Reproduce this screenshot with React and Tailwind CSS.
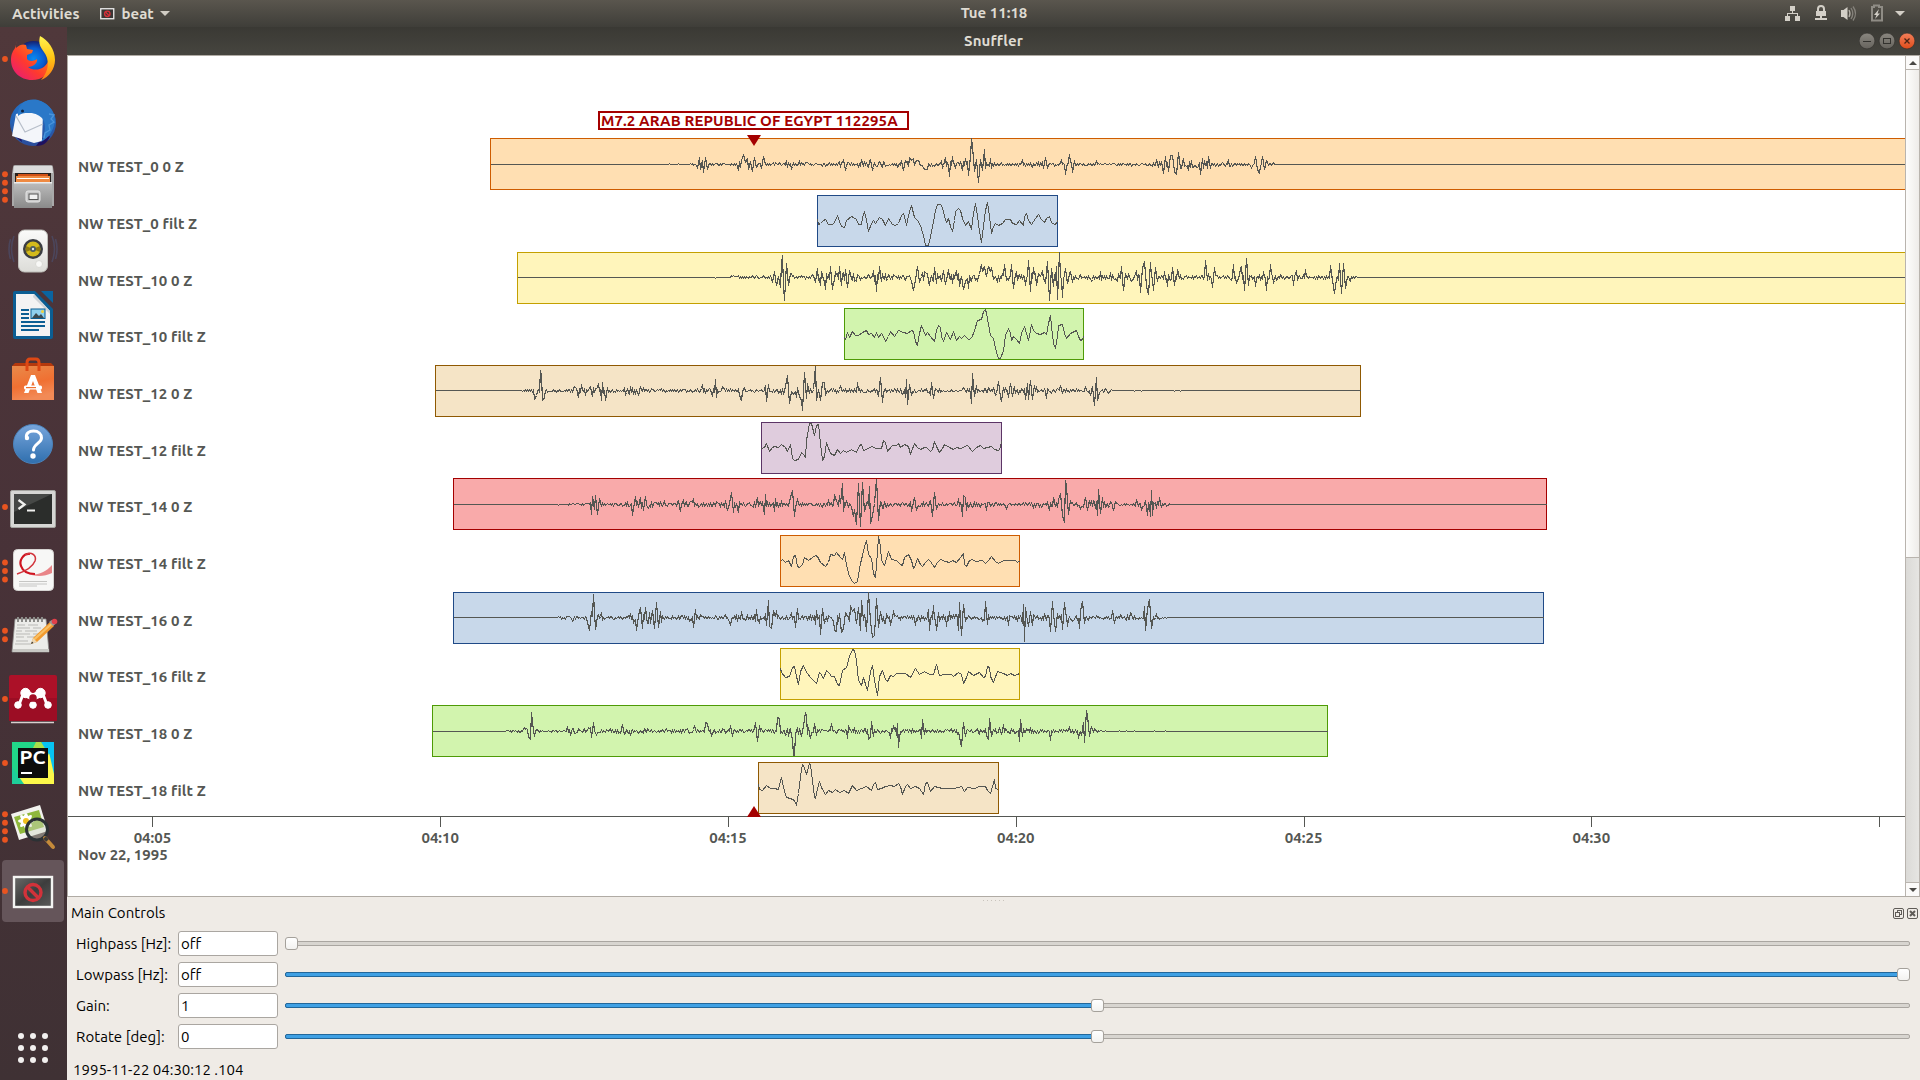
import React from "react";

/* ---------- trace data ----------
   Samples are kept in chunks. A chunk has its own origin (x0, y0), its own
   number of sample units per pixel (kx, 3 vertically) and a zero line b. */

const TRACES = [
  {
    name: "NW TEST_0 0 Z", left: 490, right: 1905, open: true, top: 138, pitch: "h-[57px]",
    box: "bg-[#ffdfb2] border-[#ce5c00]",
    raw: [
      { x0: 480, y0: 100, kx: 3, b: 193, from: 31, to: 1380,
        env: "31 0 540 0 550 3 600 3 640 4 655 12 680 12 690 7 720 5 760 5 780 14 830 14 850 10 880 8 910 7 930 12 965 10 1000 5 1060 7 1080 12 1110 10 1150 12 1190 14 1240 8 1260 12 1380 8",
        pk: "653 205 657 171 662 207 667 180 671 218 676 173 681 208 776 210 784 180 790 162 795 188 801 175 804 207 810 183 817 215 824 171 832 195 845 205 851 168 856 194 920 180 935 209 957 180 1090 178 1095 210 1144 177 1170 178 1176 212 1265 182 1271 212 1276 180 1287 171 1293 180 1300 175 1308 182 1315 182 1322 195 1330 205 1337 208 1343 208 1352 198 1362 200 1370 190" },
      { x0: 940, y0: 100, kx: 3, b: 193, from: 0, to: 2900,
        env: "0 12 160 8 230 5 290 10 330 8 350 5 400 10 430 4 480 4 560 4 590 8 610 3 640 8 660 14 730 14 790 14 830 9 860 8 920 6 980 8 1015 2 1018 0 2900 0",
        pk: "3 180 8 205 17 171 28 230 36 168 45 205 60 185 68 210 77 175 85 226 90 170 94 116 98 138 104 215 110 178 115 246 121 178 126 210 132 148 137 205 150 175 155 205 246 178 310 205 316 171 322 205 365 178 377 222 384 185 389 162 396 216 404 180 470 180 650 178 663 185 670 220 677 170 684 215 691 166 698 165 703 213 710 222 716 156 722 205 730 175 744 210 755 180 780 222 786 175 806 168 812 205 865 178 935 205 946 168 952 208 959 220 966 168 972 208 980 180 1000 188 1017 193" },
    ],
  },
  {
    name: "NW TEST_0 filt Z", left: 817, right: 1058, top: 195, pitch: "h-[57px]",
    box: "bg-[#c8d8ea] border-[#204a87]",
    line: [
      { x0: 480, y0: 100, kx: 3, p: "1011 357 1016 372 1022 371 1029 362 1036 358 1046 373 1056 373 1062 366 1072 347 1079 365 1085 378 1093 382 1100 362 1114 348 1121 353 1129 357 1136 373 1144 373 1147 353 1153 334 1159 362 1166 393 1173 371 1180 362 1187 371 1198 352 1208 357 1216 375 1226 355 1236 374 1245 376 1256 369 1263 345 1269 340 1275 362 1280 376 1288 334 1295 316 1302 352 1312 361 1322 375 1330 407 1337 437 1346 437 1352 410 1360 365 1366 330 1373 313" },
      { x0: 940, y0: 100, kx: 3, p: "0 312 7 321 13 350 20 368 26 355 32 380 37 395 42 360 47 335 54 325 60 331 66 355 77 376 86 365 95 388 100 340 106 311 112 350 118 395 124 427 130 380 136 330 142 308 147 350 154 400 160 380 165 371 175 376 186 371 196 357 210 358 218 371 228 374 237 361 249 375 254 350 260 340 266 360 275 374 286 355 296 343 304 358 312 368 320 356 327 348 334 368 342 373 348 369 352 360" },
    ],
  },
  {
    name: "NW TEST_10 0 Z", left: 517, right: 1905, open: true, top: 252, pitch: "h-[56px]",
    box: "bg-[#fff5bb] border-[#c4a000]",
    raw: [
      { x0: 480, y0: 100, kx: 3, b: 532, from: 111, to: 1380,
        env: "111 0 620 0 622 2 700 2 745 2 755 7 800 5 840 5 870 10 880 20 900 20 930 14 950 7 1000 10 1015 20 1110 18 1150 9 1180 18 1240 10 1290 10 1300 18 1380 18",
        pk: "877 548 883 514 889 555 895 530 901 563 904 490 907 465 910 555 913 602 919 489 925 556 931 520 1005 548 1012 505 1021 555 1025 515 1036 568 1050 498 1057 569 1065 515 1077 498 1084 555 1095 508 1101 562 1109 512 1180 512 1189 575 1197 499 1205 545 1295 545 1300 570 1305 540 1313 498 1319 548 1333 515 1347 555 1362 502 1370 550" },
      { x0: 940, y0: 100, kx: 3, b: 532, from: 0, to: 2900,
        env: "0 15 110 12 180 14 240 14 330 18 400 12 430 6 470 8 500 14 560 14 600 14 660 8 700 14 740 8 780 6 800 18 830 10 860 5 880 14 940 14 1000 14 1040 8 1070 16 1110 8 1150 8 1170 15 1220 10 1235 6 1252 4 1254 0 2900 0",
        pk: "3 545 10 512 17 552 25 508 38 550 50 512 57 560 64 528 69 567 77 545 85 565 95 545 107 540 117 522 123 494 127 515 132 500 140 530 145 500 150 515 155 502 160 538 165 530 172 548 193 492 200 540 213 492 220 565 229 515 256 555 265 482 272 575 280 502 290 555 300 530 308 512 315 550 323 484 328 602 335 505 341 560 348 500 353 598 359 458 366 593 375 505 382 550 390 515 398 548 455 545 480 515 510 518 545 498 550 572 557 520 590 512 601 577 607 505 613 484 620 560 626 584 631 487 640 570 646 502 652 545 672 515 683 558 698 502 704 555 711 508 796 482 801 540 805 520 816 562 823 502 880 493 890 550 900 505 904 500 913 570 918 475 925 555 933 526 946 558 970 515 979 572 992 492 1000 550 1060 555 1068 510 1095 508 1170 495 1177 540 1183 580 1190 535 1197 489 1203 580 1209 490 1215 565 1222 530 1230 545" },
    ],
  },
  {
    name: "NW TEST_10 filt Z", left: 844, right: 1084, top: 308, pitch: "h-[57px]",
    box: "bg-[#d2f4ae] border-[#4e9a06]",
    line: [
      { x0: 480, y0: 100, kx: 3, p: "1090 712 1093 712 1096 718 1103 697 1108 712 1117 694 1126 707 1136 707 1148 698 1158 690 1166 703 1174 700 1183 712 1190 698 1196 712 1203 700 1210 710 1217 724 1224 710 1232 694 1242 710 1255 692 1270 696 1283 700 1293 690 1299 695 1305 723 1312 737 1318 700 1324 676 1329 690 1335 706 1343 698 1352 710 1363 724 1370 690 1376 676" },
      { x0: 940, y0: 100, kx: 3, p: "0 683 4 710 10 724 20 697 30 717 40 694 50 720 58 708 65 714 72 706 84 719 95 716 103 690 113 661 125 659 130 635 135 627 139 640 145 672 152 705 160 714 167 745 175 775 182 775 190 750 197 705 204 686 210 700 213 720 220 709 230 719 238 731 245 700 252 679 258 700 264 722 270 690 275 674 280 690 290 699 300 704 312 696 320 704 326 670 330 645 335 680 340 730 345 745 351 710 355 675 366 673 372 700 380 715 392 700 408 691 415 710 422 720 428 718 430 710" },
    ],
  },
  {
    name: "NW TEST_12 0 Z", left: 435, right: 1361, top: 365, pitch: "h-[57px]",
    box: "bg-[#f5e4c6] border-[#8f5902]",
    raw: [
      { x0: 420, y0: 360, kx: 3, b: 92, from: 45, to: 1440,
        env: "45 0 240 0 245 2 300 3 340 8 370 10 390 5 440 5 465 12 520 15 550 14 570 6 600 5 620 14 660 12 700 5 760 7 830 8 850 10 900 12 950 6 980 8 1020 5 1050 10 1100 12 1150 14 1200 14 1230 8 1290 10 1350 7 1380 10 1410 6 1440 10",
        pk: "343 117 350 105 359 98 362 30 365 50 368 122 372 112 377 90 463 80 470 84 476 113 484 73 497 106 510 78 516 108 535 70 545 122 547 67 556 122 561 82 616 106 632 78 655 105 662 80 848 72 878 110 886 58 890 112 906 78 958 105 964 122 972 82 1036 76 1040 125 1046 74 1090 104 1097 80 1102 45 1107 130 1115 95 1120 102 1128 112 1138 108 1144 120 1148 150 1153 38 1158 115 1163 70 1168 100 1180 88 1185 18 1189 122 1195 88 1200 122 1206 67 1212 68 1217 106 1262 75 1312 68 1375 110 1381 52 1387 128" },
      { x0: 900, y0: 360, kx: 3, b: 92, from: 0, to: 1382,
        env: "0 10 60 7 90 9 120 6 180 4 200 12 240 6 290 12 330 14 400 14 430 8 490 8 520 5 560 9 600 9 620 7 630 4 650 2 980 1 985 0 1500 0",
        pk: "15 112 19 57 23 133 29 72 34 105 90 105 95 67 100 116 107 85 190 82 211 100 215 131 217 40 222 108 229 76 265 82 285 105 296 64 300 112 304 125 310 82 325 112 332 70 337 108 342 80 375 118 381 70 386 118 390 60 397 118 402 75 438 116 480 112 482 76 557 78 570 105 578 78 584 137 588 52 593 122 598 98 604 92 617 85 624 100 632 92" },
    ],
  },
  {
    name: "NW TEST_12 filt Z", left: 761, right: 1002, top: 422, pitch: "h-[56px]",
    box: "bg-[#dfccdd] border-[#5c3566]",
    line: [
      { x0: 420, y0: 360, kx: 3, p: "1025 265 1032 262 1040 250 1048 275 1056 262 1064 259 1074 262 1085 253 1096 262 1102 273 1110 253 1117 294 1124 301 1134 297 1144 277 1150 284 1155 293 1160 240 1168 190 1174 190 1183 227 1190 197 1195 193 1201 250 1207 300 1212 290 1220 247 1230 280 1242 286 1253 268 1262 280 1270 271 1280 277 1293 268 1310 277 1318 257 1324 253 1330 270 1340 268 1354 259 1368 265 1384 265 1389 241 1395 247 1403 273 1416 256 1428 255 1436 250" },
      { x0: 900, y0: 360, kx: 3, p: "0 263 14 253 24 260 32 284 44 249 52 263 62 268 72 262 80 262 90 275 98 268 104 245 110 260 118 278 126 265 134 254 148 263 160 268 170 262 180 265 202 256 218 275 228 262 240 256 250 265 274 259 284 268 296 272 300 262 303 245" },
    ],
  },
  {
    name: "NW TEST_14 0 Z", left: 453, right: 1547, top: 478, pitch: "h-[57px]",
    box: "bg-[#f9aaaa] border-[#a40000]",
    raw: [
      { x0: 420, y0: 360, kx: 3, b: 433, from: 99, to: 1440,
        env: "99 0 385 0 390 3 470 4 510 5 520 18 540 12 560 5 600 8 640 14 690 12 720 10 760 8 790 14 830 10 880 9 930 14 960 9 1020 14 1060 12 1110 14 1140 10 1160 5 1230 12 1290 14 1390 14 1440 7",
        pk: "510 428 514 464 518 410 522 448 526 406 533 462 538 415 543 440 637 465 640 445 646 409 662 412 670 452 677 409 684 445 732 420 781 455 790 418 820 415 922 452 928 430 934 396 941 457 948 430 956 457 1012 412 1033 462 1037 403 1063 455 1067 416 1110 412 1117 391 1123 470 1131 415 1226 418 1243 402 1250 425 1258 405 1262 430 1266 370 1271 455 1280 420 1298 455 1301 470 1304 448 1310 494 1315 370 1321 500 1327 367 1333 455 1340 430 1347 380 1352 490 1358 465 1363 430 1366 395 1370 357 1375 482 1382 425 1390 445" },
      { x0: 900, y0: 360, kx: 3, b: 433, from: 0, to: 1940,
        env: "0 8 30 12 60 12 100 10 120 7 170 10 200 14 230 9 270 10 300 7 370 6 400 10 440 10 460 16 490 18 510 9 540 12 560 14 610 14 640 10 660 4 690 6 720 10 760 14 790 10 806 5 812 2 830 1 832 0 1941 0",
        pk: "33 455 43 412 50 450 92 420 97 470 103 396 108 448 176 415 186 470 190 405 196 412 200 452 260 450 319 448 400 445 447 450 459 412 465 440 475 418 480 465 482 400 488 465 494 488 497 360 500 378 505 463 510 420 540 448 555 412 561 452 592 465 596 388 602 460 608 412 640 452 645 425 708 418 725 450 735 420 742 465 750 470 754 391 758 465 765 428 779 412 785 442 797 430" },
    ],
  },
  {
    name: "NW TEST_14 filt Z", left: 780, right: 1020, top: 535, pitch: "h-[57px]",
    box: "bg-[#ffdfb2] border-[#ce5c00]",
    line: [
      { x0: 420, y0: 360, kx: 3, p: "1082 603 1088 597 1096 608 1104 600 1115 620 1121 590 1126 587 1132 618 1138 623 1148 614 1153 593 1166 602 1176 593 1186 586 1192 589 1202 608 1216 620 1226 606 1232 583 1243 587 1250 578 1260 592 1268 598 1274 578 1280 612 1286 640 1294 660 1304 670 1313 665 1320 610 1328 585 1332 560 1338 541 1345 582 1354 596 1360 640 1366 652 1371 575 1376 530 1380 560 1385 600 1392 616 1398 595 1404 575 1414 598 1430 600" },
      { x0: 900, y0: 360, kx: 3, p: "0 614 6 616 14 592 26 583 33 600 39 625 44 622 51 595 60 612 68 620 75 606 84 598 92 603 104 622 112 606 122 598 135 603 148 606 156 602 168 607 180 592 190 580 194 612 200 618 208 600 216 598 226 603 246 602 256 610 266 602 275 590 285 605 296 610 310 602 335 602 345 601 352 608 360 602" },
    ],
  },
  {
    name: "NW TEST_16 0 Z", left: 453, right: 1544, top: 592, pitch: "h-[56px]",
    box: "bg-[#c8d8ea] border-[#204a87]",
    raw: [
      { x0: 420, y0: 580, kx: 3, b: 113, from: 99, to: 1440,
        env: "99 0 405 0 412 4 450 6 500 6 530 14 545 10 580 5 620 6 640 14 700 18 730 8 770 8 800 10 830 12 860 4 900 8 930 14 970 10 1000 12 1060 12 1090 7 1120 14 1150 7 1180 14 1240 16 1290 10 1400 20 1430 8 1440 12",
        pk: "457 125 503 128 509 150 513 95 517 110 521 42 527 148 532 110 543 98 632 100 640 130 650 150 655 105 662 82 668 145 677 82 686 130 697 92 704 146 709 68 715 142 720 95 725 128 820 142 825 88 930 136 965 95 1010 88 1018 130 1035 100 1040 135 1045 60 1049 140 1054 146 1060 90 1069 92 1115 98 1126 142 1133 85 1185 132 1190 90 1200 162 1206 85 1212 130 1232 112 1243 150 1250 155 1258 100 1264 158 1270 145 1276 98 1283 108 1290 75 1297 95 1304 85 1308 130 1315 82 1320 150 1324 62 1330 120 1338 155 1344 36 1350 125 1358 172 1364 165 1369 56 1374 142 1382 95 1392 130 1412 135 1420 90" },
      { x0: 900, y0: 580, kx: 2.376, b: 113, from: 0, to: 1529,
        env: "0 8 30 14 60 10 110 14 150 10 180 5 200 10 240 6 260 12 300 14 330 12 360 16 400 14 440 14 460 5 500 10 540 14 570 5 600 10 610 6 630 3 640 0 1530 0",
        pk: "36 136 68 88 71 152 79 75 86 152 92 96 110 140 118 95 138 150 141 66 145 166 150 72 155 125 196 125 202 63 208 132 257 135 290 130 293 72 296 183 299 82 305 140 310 95 314 135 358 155 363 63 369 155 374 100 386 148 391 66 397 140 427 145 430 90 434 63 438 130 504 90 510 130 548 97 580 80 584 150 588 85 592 57 598 146 603 110 610 100 617 118" },
    ],
  },
  {
    name: "NW TEST_16 filt Z", left: 780, right: 1020, top: 648, pitch: "h-[57px]",
    box: "bg-[#fff5bb] border-[#c4a000]",
    line: [
      { x0: 420, y0: 580, kx: 3, p: "1081 264 1085 278 1096 292 1108 290 1118 262 1123 260 1128 290 1134 314 1142 275 1149 257 1160 278 1175 295 1190 311 1197 278 1202 280 1210 296 1220 271 1228 280 1235 290 1244 290 1252 312 1258 317 1268 270 1280 262 1288 230 1296 207 1302 210 1308 240 1316 300 1324 315 1331 293 1343 331 1350 275 1357 256 1363 300 1372 346 1378 290 1386 272 1396 298 1402 304 1410 287 1420 290 1430 280" },
      { x0: 900, y0: 580, kx: 2.376, p: "0 281 14 281 25 292 36 265 46 284 58 275 70 282 80 282 87 253 95 286 108 284 122 284 128 290 138 276 146 284 151 310 157 292 162 275 174 287 188 276 198 292 203 290 208 260 212 262 216 290 222 307 232 274 246 281 256 285 262 281 272 287 280 284 285 280" },
    ],
  },
  {
    name: "NW TEST_18 0 Z", left: 432, right: 1328, top: 705, pitch: "h-[57px]",
    box: "bg-[#d2f4ae] border-[#4e9a06]",
    raw: [
      { x0: 420, y0: 580, kx: 3, b: 453, from: 36, to: 1440,
        env: "36 0 230 0 235 2 290 6 320 12 345 8 370 3 420 5 450 12 480 6 510 14 550 7 600 12 640 7 700 10 760 7 820 10 870 10 900 7 940 10 980 5 1010 12 1040 5 1080 8 1120 14 1180 14 1210 6 1240 8 1280 6 1290 12 1320 6 1360 14 1400 5 1420 16 1440 14",
        pk: "312 442 325 468 331 478 334 396 338 430 342 468 443 440 450 466 505 442 514 472 521 427 528 466 607 432 614 464 632 466 823 436 857 428 863 430 875 470 932 436 938 470 1006 428 1012 484 1017 436 1068 455 1073 412 1078 415 1082 460 1095 465 1105 470 1115 468 1118 475 1121 525 1124 525 1127 462 1133 442 1145 470 1150 440 1156 396 1160 405 1163 462 1172 474 1184 430 1190 465 1235 430 1282 474 1286 435 1345 478 1350 470 1355 424 1360 468 1412 474 1419 436 1431 430 1436 502" },
      { x0: 900, y0: 580, kx: 2.376, b: 453, from: 0, to: 1016,
        env: "0 7 45 9 60 8 100 5 130 8 145 18 160 6 200 12 250 10 310 10 350 8 390 9 420 8 440 20 455 9 480 4 515 2 630 1 635 0 1017 0",
        pk: "50 474 54 418 58 462 141 470 145 432 147 500 150 490 152 427 156 468 205 465 210 478 212 415 217 468 247 432 284 485 286 418 291 470 357 482 403 440 423 474 432 465 436 426 439 488 443 392 446 405 450 470 456 440 463 445" },
    ],
  },
  {
    name: "NW TEST_18 filt Z", left: 758, right: 999, top: 762, pitch: "h-[54px]",
    box: "bg-[#f5e4c6] border-[#8f5902]",
    line: [
      { x0: 420, y0: 580, kx: 3, p: "1016 612 1019 628 1026 631 1040 617 1052 626 1062 625 1074 628 1080 600 1085 592 1092 635 1098 652 1110 654 1122 660 1130 676 1134 640 1140 590 1147 553 1151 555 1158 583 1163 570 1167 550 1171 555 1176 600 1182 650 1187 654 1191 625 1198 605 1204 622 1216 643 1226 631 1236 638 1246 628 1258 636 1272 630 1286 640 1298 616 1310 631 1325 624 1340 620 1354 631 1360 612 1366 607 1372 628 1384 624 1396 620 1412 617 1424 620 1434 611" },
      { x0: 900, y0: 580, kx: 2.376, p: "0 618 5 643 12 620 17 612 26 626 38 619 47 625 55 643 61 610 66 607 73 635 82 620 100 624 130 626 146 619 153 634 160 622 178 626 190 618 203 619 208 630 214 641 219 620 224 598 228 625 233 629" },
    ],
  },
];

const pairs = (s) => {
  const n = s.split(" ").map(Number);
  const out = [];
  for (let i = 0; i < n.length; i += 2) out.push([n[i], n[i + 1]]);
  return out;
};

function lerp(env, x) {
  for (let i = 1; i < env.length; i++) {
    if (x <= env[i][0]) {
      const [a, va] = env[i - 1];
      const [b, vb] = env[i];
      return va + ((vb - va) * Math.max(0, x - a)) / (b - a || 1);
    }
  }
  return env[env.length - 1][1];
}

/* Named peaks joined by low-level jitter that follows the envelope. */
function rawPoints(chunks, seed) {
  let s = seed;
  const rnd = () => ((s = (s * 1103515245 + 12345) & 0x7fffffff) / 0x7fffffff);
  const pts = [];
  let sign = 1;
  for (const c of chunks) {
    const env = pairs(c.env);
    const peaks = pairs(c.pk).map(([x, y]) => [Math.floor(c.x0 + x / c.kx), Math.floor(c.y0 + y / 3)]);
    const at = new Map(peaks);
    const end = Math.floor(c.x0 + c.to / c.kx);
    for (let x = Math.floor(c.x0 + c.from / c.kx); x <= end; x++) {
      if (at.has(x)) {
        pts.push([x, at.get(x)]);
        continue;
      }
      if (at.has(x + 1) && at.has(x - 1)) continue;
      if (rnd() < 0.65) sign = -sign;
      const a = lerp(env, (x - c.x0) * c.kx);
      const quiet = a <= 3.5 && rnd() < 0.75;
      const v = quiet ? 0 : sign * a * (0.12 + 0.95 * rnd() * (0.4 + 0.6 * rnd()));
      pts.push([x, Math.round(c.y0 + (c.b + v) / 3 - 0.4)]);
    }
  }
  return pts;
}

const linePoints = (chunks) =>
  chunks.flatMap((c) => pairs(c.p).map(([x, y]) => [Math.floor(c.x0 + x / c.kx), Math.floor(c.y0 + y / 3)]));

function Trace({ t, i }) {
  const w = t.right - t.left;
  const pts = t.raw ? rawPoints(t.raw, 977 + i * 131) : linePoints(t.line);
  return (
    <div className={t.pitch + " flex shrink-0 items-start overflow-visible"}>
      <div className="w-[210px] shrink-0 pl-[10px] pt-[20px] text-[15px] leading-[18px] font-bold whitespace-nowrap tracking-[0.09px] text-[#555753]">
        {t.name}
      </div>
      <div
        className={t.box + " box-border h-[52px] shrink-0 border " + (t.open ? "border-r-0" : "")}
        style={{ marginLeft: t.left - 278, width: w }}
      >
        <svg className="-m-px block overflow-visible" width={w} height="52" viewBox={`${t.left} ${t.top} ${w} 52`}>
          <polyline
            points={pts.map(([x, y]) => `${x + 0.5},${y + 0.5}`).join(" ")}
            fill="none" stroke="#555753" strokeWidth={t.raw ? 1.15 : 1} strokeLinejoin="bevel" shapeRendering="crispEdges"
          />
        </svg>
      </div>
    </div>
  );
}

/* ---------- dock ---------- */

const DOCK = [
  { dots: 1, art: (
    <g>
      <circle cx="33.500" cy="32" r="18" fill="url(#ffGlobe)" />
      <path d="M17 14c-1 3-1.500 5-1 7 4-4 8-4 10-3l1 4 6 1-1 3-5 2v4c2 3 8 2 10 0 1 4-4 8-9 8 8 6 19 1 21-8 1-5-1-11-5-15 9 3 11 12 9 20-3 10-11 16-21 16-12 0-21-9-21-20 0-6 2-9 4-12z" fill="url(#ffFox)" />
      <path d="M40 9c8 4 15 13 15 24 0 9-6 17-14 20 6-7 8-14 6-22-2-8-10-10-7-22z" fill="url(#ffTail)" />
    </g>) },
  { art: (
    <g transform="translate(0 1)">
      <circle cx="33" cy="31" r="23" fill="url(#tbBlue)" />
      <path d="M12 42l10 8-2-8zM36 54c8 0 12-4 14-10l-8 2z" fill="#1e1160" />
      <path d="M12 44l4-22c8-2 18 0 27-1l-1 28-8 2z" fill="#f4f6fa" />
      <path d="M16 24l9 16 18-8" fill="none" stroke="#b7bec9" strokeWidth="1.200" />
      <path d="M18 20c2-10 10-14 20-12 10 3 16 10 17 20-1 10-6 18-14 22 4-8 6-18 1-24-6-6-18-7-24-2z" fill="#2a78c8" />
      <path d="M49 22l5 1-3 4 3 3-5 3 1 5-5 3-1 5" fill="none" stroke="#4a94da" strokeWidth="1.300" />
      <circle cx="22.500" cy="19" r="1.500" fill="#10233f" />
    </g>) },
  { dots: 4, art: (
    <g>
      <path d="M13 12q0-2 2-2h36q2 0 2 2l1 7v32H12V19z" fill="#a9a9a9" />
      <path d="M14 11h38l1 7H13z" fill="#dcdcdc" />
      <path d="M15 18h36v10H15z" fill="#2a211d" />
      <path d="M18 19h30v2H18z" fill="#d15015" /><path d="M16 21h34v7H16z" fill="#ef8a42" /><path d="M17 23h32v1H17z" fill="#fff" />
      <path d="M14 27h38v26H14z" fill="url(#grayV)" />
      <path d="M14 27h38v1.500H14z" fill="#ececec" />
      <rect x="26" y="36" width="14" height="11" rx="2" fill="#c9c9c9" stroke="#e6e6e6" /><rect x="29" y="39" width="9" height="5.500" fill="#f1f1f1" stroke="#555" />
    </g>) },
  { art: (
    <g>
      <path d="M14 17q-5 12 0 26M10.500 20q-3 10 0 20M52 17q5 12 0 26M55.500 20q3 10 0 20" fill="none" stroke="#4b5f8f" strokeWidth="1.600" opacity=".4" />
      <rect x="18.500" y="11" width="29" height="42" rx="6" fill="url(#white)" stroke="#bdbdb8" />
      <circle cx="33" cy="30" r="10" fill="#3b3d42" /><circle cx="33" cy="30" r="7.500" fill="#d3ba1c" />
      <path d="M33 30l-7-3v6zM33 30l7-3v6z" fill="#8f7b10" />
      <circle cx="33" cy="30" r="3" fill="#4b5a60" /><circle cx="33" cy="30" r="1.200" fill="#dfe8ea" />
      <circle cx="39" cy="45" r="3.500" fill="#f8f8f6" stroke="#d9d9d5" />
    </g>) },
  { art: (
    <g>
      <path d="M15 8h20l18 18v28q0 2-2 2H15q-2 0-2-2V10q0-2 2-2z" fill="#0b5e93" />
      <path d="M41 8h12v12z" fill="#0a64a0" />
      <path d="M16 11h18l16 17v25H16z" fill="#f3f3f3" /><path d="M34 11l16 17v3L33 14z" fill="#d0d4d8" />
      <path d="M21 26h8v2h-8zM21 30h8v2h-8zM21 34h8v2h-8zM21 38h24v2H21zM21 42h24v2H21zM21 46h18v2H21z" fill="#0b5e93" />
      <rect x="31" y="26" width="14" height="9.500" fill="#8fd0ee" stroke="#0b5e93" /><path d="M32 35l4-5 3 3 2-2 3 4z" fill="#3c4a50" /><circle cx="42.500" cy="28.500" r="1.500" fill="#f3d23b" />
    </g>) },
  { art: (
    <g>
      <path d="M12 19l3-3h36l3 3v6H12z" fill="#b5390d" />
      <path d="M12 19h42v34H12z" fill="url(#bag)" />
      <path d="M27 24v-8q0-4 3-4h6q3 0 3 4v8" fill="none" stroke="#dd4814" strokeWidth="3" />
      <path d="M31 28h4l7 18h-4.500l-4.500-12-4.500 12H24z" fill="#fff" />
      <rect x="24" y="38.500" width="18" height="4" rx="1.500" fill="#fff" /><path d="M26 40h10v1.200H26z" fill="#ef7030" />
    </g>) },
  { art: (
    <g>
      <circle cx="33" cy="33" r="19.500" fill="url(#help)" stroke="#4a82ba" />
      <path d="M26.500 27c-1-5 3-7 7-7 5 0 8 3 8 7 0 5-8 6-8 12" fill="none" stroke="#fff" strokeWidth="3" strokeLinecap="round" />
      <circle cx="27" cy="27" r="2.200" fill="#fff" /><circle cx="33" cy="45" r="2.700" fill="#fff" />
    </g>) },
  { dots: 1, art: (
    <g>
      <rect x="10.500" y="15.500" width="45" height="37" rx="1.500" fill="#d6d6d4" stroke="#a3a39f" />
      <rect x="14" y="19" width="38" height="30" fill="#2b2d2b" /><path d="M14 19h38L14 37z" fill="#464846" />
      <path d="M18.500 25l6 4.500-6 4.500" fill="none" stroke="#f0f0ee" strokeWidth="2.300" /><path d="M27 35.500h8" stroke="#f0f0ee" strokeWidth="2" />
    </g>) },
  { dots: 3, art: (
    <g>
      <rect x="13.500" y="10.500" width="40" height="41" rx="4" fill="#f7f7f6" stroke="#d5d3d1" />
      <path d="M19 42.500h28M19 45h28M19 47h18" stroke="#c6c6c4" strokeWidth="1.200" />
      <path d="M27 34c8 3 17 1 25-8v8c-8 4-18 4-25 0z" fill="#e2545a" opacity=".7" />
      <path d="M30 15c-7-1-11 7-9 12 2 6 8 8 14 8" fill="none" stroke="#cf1420" strokeWidth="2.200" />
      <path d="M25 16c6-4 12 0 10 6-2 5-9 10-18 13" fill="none" stroke="#d2343c" strokeWidth="1.500" />
    </g>) },
  { dots: 2, art: (
    <g>
      <path d="M15 16h31l3 33H12z" fill="#ecece9" stroke="#8d8d8a" strokeWidth=".8" />
      <path d="M13 46h36v3H13z" fill="#c8c8c4" />
      <path d="M17 22h8M28 22h10M17 25h13M33 25h8M16 28h6M25 28h12M16 31h14M33 31h6M16 34h8M27 34h10M16 38h12M15 41h16" stroke="#b9b9b6" strokeWidth="1" />
      <path d="M18 14v5M22 14v5M26 14v5M30 14v5M34 14v5M38 14v5M42 14v5" stroke="#8b8b88" strokeWidth="2" />
      <path d="M31 41l2-6 17-16 4 4-17 16z" fill="#f29a2e" /><path d="M33 36l18-16 1.500 1.500-18 16z" fill="#f8c065" /><path d="M31 41l2-6 4 4z" fill="#ecd7b3" /><path d="M31 41l1-2.500 1.500 1.500z" fill="#333" />
      <path d="M49 19l2.500-2 4 4-2.500 2z" fill="#9a9a98" /><circle cx="54.500" cy="18.500" r="2.800" fill="#e0404a" />
    </g>) },
  { dots: 1, art: (
    <g>
      <path d="M11 55.500h43" stroke="#d8d0cf" strokeWidth="1.500" />
      <rect x="9" y="8" width="48" height="46" rx="2" fill="#ac1128" /><path d="M9 31h48v22q0 1-1 1H10q-1 0-1-1z" fill="#9c0d24" />
      <g fill="#fff" stroke="#fff" strokeWidth="1">
        <path d="M18 38c4-3 2-8 6-11M48 38c-4-3-2-8-6-11" fill="none" strokeWidth="3" />
        <path d="M26 27l7 3 7-3" fill="none" strokeWidth="7" />
        <circle cx="25.500" cy="26" r="4.700" /><circle cx="40.500" cy="26" r="4.700" />
        <circle cx="18" cy="38" r="3.300" /><circle cx="48" cy="38" r="3.300" /><circle cx="33" cy="38" r="3.300" />
      </g>
      <circle cx="33" cy="31" r="3.800" fill="#a30f26" />
    </g>) },
  { dots: 1, art: (
    <g>
      <rect x="12" y="11" width="42" height="42" fill="#21d789" />
      <path d="M42 11h12v30L42 24z" fill="#07c3f2" /><path d="M36 11h5l9 14-18-6z" fill="#a8e04a" /><path d="M54 38v15H20l-2-6 34-26z" fill="#fcf84a" /><path d="M12 36l12 17H12z" fill="#1ecf9a" /><path d="M48 17h6v26z" fill="#07c3f2" />
      <rect x="18" y="17" width="30" height="30" fill="#0c0c0c" />
      <text x="19.500" y="33" fontFamily="Ubuntu, 'Noto Sans', sans-serif" fontWeight="bold" fontSize="18" textLength="26" lengthAdjust="spacingAndGlyphs" fill="#fff">PC</text>
      <rect x="21" y="41" width="11" height="2" fill="#fff" />
    </g>) },
  { dots: 4, art: (
    <g>
      <path d="M11 19l29-9 8 26-29 9z" fill="#f2f2ee" /><path d="M14 22l25-7 5 17-24 7z" fill="#8fb83c" />
      <g fill="#fff"><ellipse cx="26" cy="26" rx="8" ry="2.600" /><ellipse cx="26" cy="26" rx="2.600" ry="8" /><ellipse cx="26" cy="26" rx="8" ry="2.600" transform="rotate(45 26 26)" /><ellipse cx="26" cy="26" rx="8" ry="2.600" transform="rotate(-45 26 26)" /></g>
      <circle cx="26" cy="26" r="3" fill="#f0c020" />
      <circle cx="37" cy="34.500" r="10.500" fill="#cfd8c4" fillOpacity=".45" stroke="#2b3134" strokeWidth="3" />
      <path d="M45 43l8 9" stroke="#c58a3a" strokeWidth="4" strokeLinecap="round" /><path d="M44.500 42.500l3 3" stroke="#3a3a38" strokeWidth="3.500" />
    </g>) },
  { dots: 1, active: true, art: (
    <g>
      <rect x="14" y="18" width="38" height="30" fill="url(#dark)" stroke="#f4f4f2" strokeWidth="2.400" />
      <circle cx="33" cy="33.500" r="8" fill="none" stroke="#d2323a" strokeWidth="3.400" /><path d="M27.500 28l11 11" stroke="#d2323a" strokeWidth="3.400" />
    </g>) },
];

function Dock() {
  return (
    <aside className="flex w-[67px] shrink-0 flex-col bg-linear-to-b from-[#50383b] via-[#483238] to-[#3f3134]">
      {DOCK.map((d, i) => (
        <svg key={i} className="block h-16 w-[67px] shrink-0" viewBox="0 0 67 64">
          {i === 0 && (
            <defs>
              <radialGradient id="ffGlobe"><stop offset="0" stopColor="#0a8bf0" /><stop offset=".6" stopColor="#0a5bd0" /><stop offset="1" stopColor="#15206e" /></radialGradient>
              <linearGradient id="ffFox" x1="0" y1="1" x2="1" y2="0"><stop offset="0" stopColor="#e31587" /><stop offset=".4" stopColor="#ff3a2e" /><stop offset="1" stopColor="#ffb000" /></linearGradient>
              <linearGradient id="ffTail" x1="0" y1="0" x2="0" y2="1"><stop offset="0" stopColor="#fff44f" /><stop offset=".5" stopColor="#ffc414" /><stop offset="1" stopColor="#ff7a18" /></linearGradient>
              <linearGradient id="tbBlue" x1="0" y1="0" x2="0" y2="1"><stop offset="0" stopColor="#2273c9" /><stop offset="1" stopColor="#2b4d9b" /></linearGradient>
              <linearGradient id="grayV" x1="0" y1="0" x2="0" y2="1"><stop offset="0" stopColor="#bdbdbd" /><stop offset="1" stopColor="#8a8a8a" /></linearGradient>
              <linearGradient id="white" x1="0" y1="0" x2="0" y2="1"><stop offset="0" stopColor="#fbfbfa" /><stop offset="1" stopColor="#dcdcd8" /></linearGradient>
              <linearGradient id="bag" x1="0" y1="0" x2=".3" y2="1"><stop offset="0" stopColor="#e98a4a" /><stop offset=".6" stopColor="#f07032" /><stop offset="1" stopColor="#f28a56" /></linearGradient>
              <linearGradient id="help" x1="0" y1="0" x2="0" y2="1"><stop offset="0" stopColor="#78a6dc" /><stop offset="1" stopColor="#2f6fae" /></linearGradient>
              <linearGradient id="dark" x1="0" y1="0" x2="1" y2="1"><stop offset="0" stopColor="#6b6b6a" /><stop offset=".5" stopColor="#3d3d3d" /><stop offset="1" stopColor="#5b5b5a" /></linearGradient>
            </defs>
          )}
          {d.active && <rect x="2" y="1" width="62" height="62" rx="4" fill="#65555a" />}
          {Array.from({ length: d.dots || 0 }, (_, k) => (
            <circle key={k} cx="5" cy={32 + (k - (d.dots - 1) / 2) * 8.5} r="2.900" fill="#e95420" />
          ))}
          {d.art}
        </svg>
      ))}
      <div className="mt-auto mb-[17px] ml-[18px] grid w-[30px] grid-cols-3 gap-[6px]">
        {Array.from({ length: 9 }, (_, k) => (
          <span key={k} className="size-[6px] rounded-full bg-[#f2f0ef]" />
        ))}
      </div>
    </aside>
  );
}

/* ---------- bars ---------- */

function TopBar() {
  return (
    <header className="grid h-[27px] shrink-0 grid-cols-[1fr_auto_1fr] items-center bg-linear-to-b from-[#5a564e] to-[#3f3e39] text-[15px] leading-[18px] font-bold text-[#dfdbd2]">
      <div className="flex items-center pl-[12px]">
        <span className="tracking-[0.08px]">Activities</span>
        <svg className="ml-[20px] block" width="15" height="12" viewBox="0 0 15 12">
          <rect x=".75" y=".75" width="13" height="10" fill="#3a3635" stroke="#eee" strokeWidth="1.300" />
          <circle cx="7.300" cy="5.800" r="2.700" fill="none" stroke="#d8303a" strokeWidth="1.400" /><path d="M5.500 4l3.600 3.600" stroke="#d8303a" strokeWidth="1.300" />
        </svg>
        <span className="ml-[7px]">beat</span>
        <svg className="ml-[6px] block" width="10" height="5" viewBox="0 0 10 5"><path d="M0 0h10L5 5z" fill="#d0ccc3" /></svg>
      </div>
      <span className="pb-px pl-[68px]">Tue 11:18</span>
      <svg className="block justify-self-end" width="140" height="27" viewBox="1780 0 140 27" fill="#d3cfc7">
        <path d="M1790 6h5v5h-5zM1785 16h5v5h-5zM1795 16h5v5h-5zM1787 16v-3h5v-2h1v2h5v3h-1v-2h-9v2z" />
        <path d="M1817 11V9a4 4 0 018 0v2h1v5h-10v-5zm2 0h4V9a2 2 0 00-4 0zM1820 16h2v2h5v2h-12v-2h5z" />
        <path d="M1841 10h2.500l4-3v13l-4-3H1841z" />
        <path d="M1849 10q2 3.500 0 7" fill="none" stroke="#b5b1a9" strokeWidth="1.300" /><path d="M1851 8q3.500 5.500 0 11M1853 6.500q5 7 0 14" fill="none" stroke="#85827b" strokeWidth="1.300" />
        <path d="M1872 7h2V5.500h5V7h3v13.500h-10z" fill="none" stroke="#8f8c85" strokeWidth="2" /><path d="M1879 9l-5 6h2.500l-1.500 4 5-5.500h-2.500z" />
        <path d="M1895 11h10l-5 5z" />
      </svg>
    </header>
  );
}

function TitleBar() {
  return (
    <div className="grid h-7 shrink-0 grid-cols-[1fr_auto_1fr] items-center bg-linear-to-b from-[#3a3934] to-[#46453f] text-[15px] leading-[18px] font-bold text-[#dfdbd2]">
      <span />
      <span className="tracking-[0.15px]">Snuffler</span>
      <svg className="block justify-self-end" width="61" height="28" viewBox="1859 27 61 28">
        <defs>
          <linearGradient id="btn" x1="0" y1="0" x2="0" y2="1"><stop offset="0" stopColor="#8a8780" /><stop offset="1" stopColor="#66635d" /></linearGradient>
          <linearGradient id="btnClose" x1="0" y1="0" x2="0" y2="1"><stop offset="0" stopColor="#f37f5a" /><stop offset="1" stopColor="#df4c1a" /></linearGradient>
        </defs>
        <circle cx="1867" cy="41" r="7.900" fill="url(#btn)" stroke="#2f2e2a" strokeWidth=".6" />
        <circle cx="1887" cy="41" r="7.900" fill="url(#btn)" stroke="#2f2e2a" strokeWidth=".6" />
        <circle cx="1907" cy="41" r="7.900" fill="url(#btnClose)" stroke="#2f2e2a" strokeWidth=".6" />
        <path d="M1863 41.500h8" stroke="#33322e" /><rect x="1883.500" y="38.500" width="7" height="5" fill="none" stroke="#33322e" />
        <path d="M1904.500 38.500l5 5M1909.500 38.500l-5 5" stroke="#4a2415" strokeWidth="1.300" />
      </svg>
    </div>
  );
}

function ScrollBar() {
  return (
    <div className="flex w-[15px] shrink-0 flex-col border-x border-[#b9b4ae]">
      <div className="flex h-[13px] shrink-0 items-center justify-center bg-[#fbfaf9]">
        <svg width="8" height="4" viewBox="0 0 8 4"><path d="M4 0l4 4H0z" fill="#4a4845" /></svg>
      </div>
      <div className="h-[489px] shrink-0 border-y border-[#b9b4ae] bg-linear-to-r from-[#fdfdfc] to-[#eeece9]" />
      <div className="grow bg-linear-to-r from-[#dbdad7] to-[#e6e5e2]" />
      <div className="flex h-[14px] shrink-0 items-center justify-center border-t border-[#b9b4ae] bg-[#fbfaf9]">
        <svg width="8" height="4" viewBox="0 0 8 4"><path d="M0 0h8L4 4z" fill="#4a4845" /></svg>
      </div>
    </div>
  );
}

const TICKS = ["04:05", "04:10", "04:15", "04:20", "04:25", "04:30", ""];

function Axis() {
  return (
    <div className="shrink-0 overflow-hidden border-t border-[#555753] text-[15px] leading-[17px] font-bold text-[#555753]">
      <div className="-ml-[59px] flex w-[2100px]">
        {TICKS.map((t, i) => (
          <div key={i} className="flex w-[287.8px] shrink-0 flex-col items-center">
            <span className="h-[10px] w-px bg-[#555753]" />
            <span className="mt-[2px] h-[17px] pr-[1px]">{t}</span>
          </div>
        ))}
      </div>
      <div className="pl-[10px]">Nov 22, 1995</div>
    </div>
  );
}

function Viewer() {
  return (
    <div className="relative flex grow flex-col overflow-hidden bg-white pt-[82px]">
      {TRACES.map((t, i) => <Trace key={t.name} t={t} i={i} />)}
      <Axis />
      <div className="absolute top-[55px] left-[530px] h-[19px] w-[311px] border-2 border-[#a40000] bg-white pl-px text-[15px] leading-[16px] font-bold whitespace-nowrap tracking-[0.11px] text-[#a40000]">
        M7.2 ARAB REPUBLIC OF EGYPT 112295A
      </div>
      <svg className="absolute top-[79px] left-[679px]" width="14" height="11" viewBox="0 0 14 11"><path d="M0 0h14L7 11z" fill="#a40000" /></svg>
      <svg className="absolute top-[750px] left-[679px]" width="14" height="11" viewBox="0 0 14 11"><path d="M0 11h14L7 0z" fill="#a40000" /></svg>
    </div>
  );
}

/* ---------- controls ---------- */

const CONTROLS = [
  { label: "Highpass [Hz]:", value: "off", at: 0 },
  { label: "Lowpass [Hz]:", value: "off", at: 1 },
  { label: "Gain:", value: "1", at: 0.5 },
  { label: "Rotate [deg]:", value: "0", at: 0.5 },
];

function Slider({ at }) {
  return (
    <div className="relative ml-[7px] flex h-[13px] w-[1625px] items-center">
      <div className="h-[5px] w-full rounded-[2px] border border-[#aaa6a1] bg-[#d8d5d0]" />
      <div
        className={at > 0 ? "absolute top-1 left-0 h-[5px] rounded-[2px] border border-[#22679b] bg-[#3fa0e4]" : "hidden"}
        style={{ width: at * 1612 + 3 }}
      />
      <div className="absolute top-0 size-[13px] rounded-[3px] border border-[#a5a19b] bg-linear-to-b from-white to-[#f3f2f0]" style={{ left: at * 1612 }} />
    </div>
  );
}

function Controls() {
  return (
    <section className="flex h-[183px] shrink-0 flex-col bg-[#efebe6] text-[15px] leading-[18px] text-black">
      <div className="flex h-[6px] items-center justify-center gap-[3px]">
        {Array.from({ length: 6 }, (_, k) => <span key={k} className="size-px bg-[#c9c4bd]" />)}
      </div>
      <div className="flex h-[20px] items-center justify-between pr-[2px] pl-[4px]">
        <span className="tracking-[0.05px]">Main Controls</span>
        <span className="flex gap-[3px]">
          <svg width="11" height="11" viewBox="0 0 11 11" fill="none" stroke="#5f5b57"><rect x=".5" y=".5" width="10" height="10" rx="1.500" /><rect x="4.500" y="2.500" width="4" height="4" /><rect x="2.500" y="4.500" width="4" height="4" fill="#efebe6" /></svg>
          <svg width="11" height="11" viewBox="0 0 11 11" fill="none" stroke="#5f5b57"><rect x=".5" y=".5" width="10" height="10" rx="1.500" /><path d="M3 3l5 5M8 3l-5 5" strokeWidth="2" /></svg>
        </span>
      </div>
      <div className="mt-2 flex flex-col gap-[6px]">
        {CONTROLS.map((c) => (
          <div key={c.label} className="flex h-[25px] items-center pl-[9px]">
            <span className="w-[102px] whitespace-nowrap tracking-[0.06px]">{c.label}</span>
            <div className="flex h-[25px] w-[100px] items-center rounded-[3px] border border-[#aaa6a1] bg-white pl-[2px]">{c.value}</div>
            <Slider at={c.at} />
          </div>
        ))}
      </div>
      <div className="mt-[12px] pl-[6px]">1995-11-22 04:30:12 .104</div>
    </section>
  );
}

export default function App() {
  return (
    <div className="flex h-[1080px] w-[1920px] flex-col overflow-hidden bg-[#3f3e39] font-['Ubuntu','Noto_Sans',sans-serif]">
      <TopBar />
      <div className="flex grow">
        <Dock />
        <main className="flex w-[1853px] flex-col">
          <TitleBar />
          <div className="flex h-[842px] shrink-0 border-y border-l border-[#b0aba4]">
            <Viewer />
            <ScrollBar />
          </div>
          <Controls />
        </main>
      </div>
    </div>
  );
}
